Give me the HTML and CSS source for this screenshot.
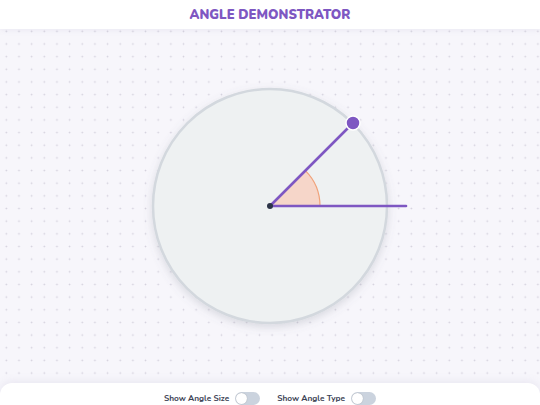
FILE: index.html
```html
<!DOCTYPE html>
<html>
<head>
  <title>Angle Demonstrator</title>
<link rel="stylesheet" href="styles.css">
</head>
<body>
  <header>
    <h1>Angle Demonstrator</h1>
  </header>
  <main>
    <svg class="stage" width="300" height="250" viewBox="0 0 300 250">
      <defs>
        <filter id="soft" x="-20%" y="-20%" width="140%" height="140%">
          <feDropShadow dx="0" dy="3" stdDeviation="4" flood-color="#6b6f80" flood-opacity="0.22"/>
        </filter>
      </defs>
      <!-- protractor disc -->
      <circle cx="150" cy="125" r="117" fill="#eef1f2" stroke="#d3d8de" stroke-width="2.5" filter="url(#soft)"/>
      <!-- angle wedge, 45 degrees -->
      <path d="M150 125 L200 125 A50 50 0 0 0 185.36 89.64 Z" fill="#f6d6c9"/>
      <path d="M200 125 A50 50 0 0 0 185.36 89.64" fill="none" stroke="#f0a27a" stroke-width="1.2"/>
      <!-- arms -->
      <line x1="150" y1="125" x2="286" y2="125" stroke="#7e57c2" stroke-width="2.6" stroke-linecap="round"/>
      <line x1="150" y1="125" x2="233" y2="42" stroke="#7e57c2" stroke-width="2.6" stroke-linecap="round"/>
      <circle cx="233" cy="42" r="7" fill="#7e57c2" stroke="#fff" stroke-width="1.5"/>
      <circle cx="150" cy="125" r="3" fill="#2c3448"/>
    </svg>
  </main>
  <footer>
    <label class="switch-row">
      Show Angle Size
      <span class="toggle"><span class="knob"></span></span>
    </label>
    <label class="switch-row">
      Show Angle Type
      <span class="toggle"><span class="knob"></span></span>
    </label>
  </footer>
</body>
</html>
```

FILE: styles.css
```css
html, body {
  height: 100%;
}

body {
  font-family: "Nunito", "Lato", "Open Sans", sans-serif;
  margin: 0;
  padding: 0;
  display: flex;
  flex-direction: column;
  overflow: hidden;
  background-color: #f7f6fb;
}

header {
  background-color: #fff;
  height: 29px;
  flex-shrink: 0;
  display: flex;
  align-items: center;
  justify-content: center;
  box-shadow: 0 1px 6px rgba(120, 110, 160, 0.10);
  position: relative;
  z-index: 1;
}

header h1 {
  margin: 0;
  font-size: 13px;
  font-weight: 900;
  letter-spacing: 0;
  text-transform: uppercase;
  color: #7e57c2;
}

main {
  flex: 1;
  display: flex;
  align-items: center;
  justify-content: center;
  background-color: #f7f6fb;
  background-image: radial-gradient(circle, #d3d0dc 0.7px, transparent 1.1px);
  background-size: 12.67px 12.67px;
  background-position: 0 -4px;
}

.stage {
  display: block;
  overflow: visible;
}

footer {
  height: 22px;
  flex-shrink: 0;
  box-sizing: border-box;
  background-color: #fff;
  border-radius: 12px 12px 0 0;
  box-shadow: 0 -2px 8px rgba(120, 110, 160, 0.10);
  display: flex;
  justify-content: center;
  align-items: flex-start;
  gap: 17px;
  padding-top: 9px;
}

.switch-row {
  display: flex;
  align-items: center;
  gap: 6px;
  font-size: 8.3px;
  font-weight: 700;
  color: #3b4254;
}

.toggle {
  width: 25px;
  height: 13px;
  border-radius: 7px;
  background-color: #cbd3de;
  display: flex;
  align-items: center;
  padding-left: 1px;
  box-sizing: border-box;
}

.knob {
  width: 11px;
  height: 11px;
  border-radius: 50%;
  background-color: #fff;
  box-shadow: 0 0 1px rgba(0, 0, 0, 0.3);
}
```
